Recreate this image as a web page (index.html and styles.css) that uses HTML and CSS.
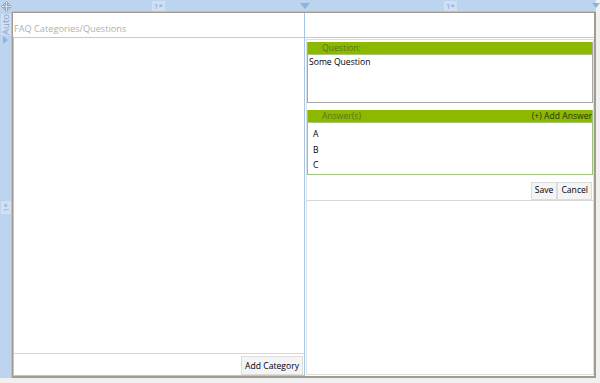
FILE: index.html
```html
<!DOCTYPE html>
<html lang="en">
<head>
    <meta charset="UTF-8">
    <meta name="viewport" content="width=device-width, initial-scale=1.0">
    <title>FAQ Designer</title>
    <link rel="stylesheet" href="styles.css">
</head>
<body>

    <div class="designer">
        <div class="corner">
            <svg width="11" height="11" viewBox="0 0 11 11">
                <path d="M5.5 0.5 L7.5 2.5 H6.2 V4.8 H8.5 V3.5 L10.5 5.5 L8.5 7.5 V6.2 H6.2 V8.5 H7.5 L5.5 10.5 L3.5 8.5 H4.8 V6.2 H2.5 V7.5 L0.5 5.5 L2.5 3.5 V4.8 H4.8 V2.5 H3.5 Z" fill="#f4f8fc" stroke="#6f8fb5" stroke-width="0.8"/>
            </svg>
        </div>

        <div class="ruler-top">
            <div class="ruler-col"><span class="star">1*</span></div>
            <div class="ruler-col"><span class="star">1*</span></div>
            <span class="marker marker-mid"></span>
            <span class="marker marker-end"></span>
        </div>

        <div class="ruler-left">
            <div class="ruler-row first">
                <span class="auto">Auto</span>
                <span class="marker-side"></span>
            </div>
            <div class="ruler-row"><span class="star side">1*</span></div>
        </div>

        <div class="canvas">
            <div class="cell head left-col">
                <span class="title">FAQ Categories/Questions</span>
            </div>
            <div class="cell head"></div>

            <div class="cell left-col">
                <div class="list-panel">
                    <div class="list-body"></div>
                    <div class="list-foot">
                        <button class="btn">Add Category</button>
                    </div>
                </div>
            </div>

            <div class="cell">
                <div class="edit-panel">
                    <div class="group">
                        <div class="group-head"><span class="head-label">Question:</span></div>
                        <div class="question-box">Some Question</div>
                    </div>

                    <div class="group answers">
                        <div class="group-head">
                            <span class="head-label">Answer(s)</span>
                            <span class="head-link">(+) Add Answer</span>
                        </div>
                        <ul class="answer-list">
                            <li>A</li>
                            <li>B</li>
                            <li>C</li>
                        </ul>
                    </div>

                    <div class="actions">
                        <button class="btn">Save</button>
                        <button class="btn">Cancel</button>
                    </div>
                </div>
            </div>
        </div>
    </div>

</body>
</html>
```

FILE: styles.css
```css
body {
    margin: 0;
    padding: 0;
    background-color: #f0f0f0;
    font-family: 'Segoe UI', 'Open Sans', 'Noto Sans', sans-serif;
    font-size: 8.6px;
    color: #000;
}

.designer {
    display: grid;
    grid-template-columns: 12px 584px;
    grid-template-rows: 12px 366px;
    width: 600px;
    height: 383px;
}

.corner {
    background-color: #bcd4ee;
    display: flex;
    align-items: center;
    justify-content: center;
}

/* rulers */
.ruler-top {
    position: relative;
    display: grid;
    grid-template-columns: 293px 1fr;
    background-color: #bcd4ee;
    border-bottom: 1px solid #a9c2de;
    box-sizing: border-box;
}

.ruler-col {
    display: flex;
    justify-content: center;
    align-items: center;
}

.star {
    font-size: 8px;
    line-height: 10px;
    color: #8aa6c8;
    background-color: #cfe0f3;
    padding: 0 2px;
}

.marker {
    position: absolute;
    top: 3px;
    width: 0;
    height: 0;
    border-left: 5px solid transparent;
    border-right: 5px solid transparent;
    border-top: 6px solid #8fb3dc;
}

.marker-mid {
    left: 288px;
}

.marker-end {
    right: -4px;
    border-left-width: 4px;
    border-right-width: 4px;
    border-top-width: 5px;
}

.ruler-left {
    display: grid;
    grid-template-rows: 25px 1fr;
    background-color: #bcd4ee;
    border-right: 1px solid #a9c2de;
    box-sizing: border-box;
}

.ruler-row {
    position: relative;
    display: flex;
    justify-content: center;
    align-items: center;
}

.ruler-row.first {
    flex-direction: column;
    justify-content: flex-start;
    padding-top: 2px;
}

.auto {
    writing-mode: vertical-rl;
    transform: rotate(180deg);
    font-size: 9.5px;
    line-height: 10px;
    color: #8aa6c8;
    background-color: #cfe0f3;
}

.marker-side {
    width: 0;
    height: 0;
    border-top: 4px solid transparent;
    border-bottom: 4px solid transparent;
    border-left: 5px solid #8fb3dc;
    margin-top: 1px;
}

.star.side {
    writing-mode: vertical-rl;
    transform: rotate(180deg);
    padding: 2px 0;
}

/* designer canvas */
.canvas {
    display: grid;
    grid-template-columns: 292px 1fr;
    grid-template-rows: 25px 1fr;
    background-color: #fff;
    border: 1px solid #a39a90;
    border-width: 1px 2px 2px 1px;
    box-sizing: border-box;
}

.cell {
    display: flex;
    min-height: 0;
}

.cell.head {
    border-bottom: 1px solid #b4cce6;
    align-items: center;
}

.cell.left-col {
    border-right: 1px solid #a6c4e4;
}

.title {
    font-size: 9.2px;
    color: #b0b0b0;
    padding-left: 1px;
    margin-top: 6px;
}

.list-panel {
    flex: 1;
    display: flex;
    flex-direction: column;
    border: 1px solid #c4c4c4;
    border-top: none;
    border-right: none;
}

.list-body {
    flex: 1;
    border-bottom: 1px solid #d6d6d6;
}

.list-foot {
    display: flex;
    justify-content: flex-end;
    padding: 2px 1px 0 0;
}

.btn {
    font-family: inherit;
    font-size: 8.6px;
    color: #000;
    background-color: #f4f4f4;
    border: 1px solid #dcdcdc;
    border-radius: 0;
    padding: 0 3px;
    height: 19px;
    line-height: 16px;
    cursor: pointer;
}

.edit-panel {
    flex: 1;
    display: flex;
    flex-direction: column;
    margin: 1px 0 1px 1px;
    border: 1px solid #dedede;
    padding: 2px 0 0 0;
    box-sizing: border-box;
}

.group {
    border: 1px solid #a8a8a8;
    border-top: none;
}

.group-head {
    display: flex;
    justify-content: space-between;
    align-items: center;
    height: 12px;
    background-color: #8cb800;
    border-bottom: 1px solid #a5c97a;
}

.head-label {
    padding-left: 14px;
    color: #56761c;
}

.head-link {
    color: #26330c;
}

.question-box {
    height: 45px;
    padding: 1px 1px;
    line-height: 12px;
}

.group.answers {
    margin-top: 7px;
    border-color: #9fc27a;
}

.answer-list {
    list-style: none;
    margin: 0;
    padding: 4px 0 0 5px;
}

.answer-list li {
    line-height: 15.5px;
}

.actions {
    display: flex;
    justify-content: flex-end;
    gap: 0;
    padding: 7px 1px 0 0;
    border-bottom: 1px solid #d6d6d6;
}

.actions .btn {
    height: 18px;
    line-height: 15px;
}
```
